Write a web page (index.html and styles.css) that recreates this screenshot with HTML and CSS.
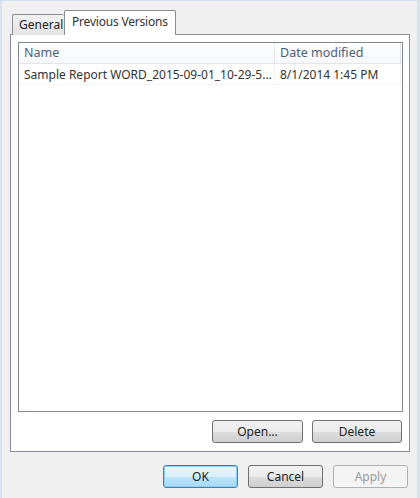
FILE: index.html
```html
<!DOCTYPE html>
<html>
<head>
<meta charset="utf-8">
<link rel="stylesheet" href="styles.css">
</head>
<body>
<div class="window">
  <div class="tabs">
    <div class="tab">General</div>
    <div class="tab active">Previous Versions</div>
  </div>
  <div class="panel">
    <div class="list">
      <div class="header">
        <div class="col name">Name</div>
        <div class="col date">Date modified</div>
      </div>
      <div class="row">
        <div class="col name">Sample Report WORD_2015-09-01_10-29-5...</div>
        <div class="col date">8/1/2014 1:45 PM</div>
      </div>
    </div>
    <div class="actions">
      <button class="btn wide">Open...</button>
      <button class="btn wide2">Delete</button>
    </div>
  </div>
  <div class="footer">
    <button class="btn default">OK</button>
    <button class="btn">Cancel</button>
    <button class="btn disabled">Apply</button>
  </div>
</div>
</body>
</html>
```
FILE: styles.css
```css
html, body {
  margin: 0;
  padding: 0;
}
body {
  width: 420px;
  height: 498px;
  background: #f0f0f0;
  font-family: "Noto Sans", "Open Sans", sans-serif;
  font-size: 12px;
  color: #1e1e1e;
  overflow: hidden;
}
.window {
  box-sizing: border-box;
  height: 498px;
  border-left: 2px solid #d6e2f1;
  border-right: 3px solid #d6e2f1;
  border-top: 1px solid #d6e2f1;
  padding: 9px 7px 0 8px;
}
.tabs {
  display: flex;
  align-items: flex-end;
  height: 25px;
  padding-left: 2px;
  position: relative;
  z-index: 2;
  margin-bottom: -1px;
}
.tab {
  box-sizing: border-box;
  height: 21px;
  width: 52px;
  border: 1px solid #898c95;
  border-bottom: none;
  border-right: none;
  border-radius: 2px 2px 0 0;
  background: linear-gradient(#f2f2f2, #e3e3e3);
  padding: 2px 0 0 6px;
  line-height: 16px;
  color: #222;
  white-space: nowrap;
  overflow: hidden;
}
.tab.active {
  height: 25px;
  width: 112px;
  background: #fff;
  border-right: 1px solid #898c95;
  padding: 3px 0 0 7px;
  color: #333;
  font-size: 12px;
  letter-spacing: -0.2px;
}
.panel {
  box-sizing: border-box;
  width: 400px;
  height: 418px;
  background: #fff;
  border: 1px solid #898c95;
  padding: 7px 6px 0 7px;
  position: relative;
  z-index: 1;
}
.list {
  box-sizing: border-box;
  height: 370px;
  border: 1px solid #828790;
  background: #fff;
}
.header, .row {
  display: flex;
}
.header {
  height: 20px;
  border-bottom: 1px solid #e5e5e5;
  background: linear-gradient(#ffffff, #f6f7f9);
  color: #4c607a;
  font-size: 12.5px;
}
.header .col {
  border-right: 1px solid #e3e6ea;
  line-height: 19px;
}
.row {
  height: 21px;
  line-height: 21px;
  color: #333;
}
.row .col {
  border-right: 1px dotted #e8e8e8;
  border-bottom: 1px dotted #ececec;
}
.col {
  box-sizing: border-box;
  white-space: nowrap;
  overflow: hidden;
}
.col.name {
  width: 256px;
  padding-left: 5px;
}
.col.date {
  width: 126px;
  padding-left: 5px;
}
.actions {
  display: flex;
  justify-content: flex-end;
  gap: 9px;
  margin-top: 8px;
  padding-right: 1px;
}
.btn {
  box-sizing: border-box;
  height: 23px;
  width: 75px;
  border: 1px solid #707070;
  border-radius: 3px;
  background: linear-gradient(#f2f2f2 0%, #ebebeb 50%, #dddddd 51%, #cfcfcf 100%);
  font-family: inherit;
  font-size: 12px;
  color: #222;
  padding: 0;
  margin: 0;
  line-height: 20px;
}
.btn.wide { width: 91px; }
.btn.wide2 { width: 90px; }
.btn.default {
  border-color: #3c7fb1;
  background: linear-gradient(#eaf6fd 0%, #d9f0fc 50%, #bee6fd 51%, #a7d9f5 100%);
  box-shadow: inset 0 0 0 1px #8fd1f3;
}
.btn.disabled {
  border-color: #adb2b5;
  background: #f4f4f4;
  color: #9a9a9a;
}
.footer {
  display: flex;
  justify-content: flex-end;
  gap: 10px;
  margin-top: 13px;
  padding-right: 2px;
}
```
